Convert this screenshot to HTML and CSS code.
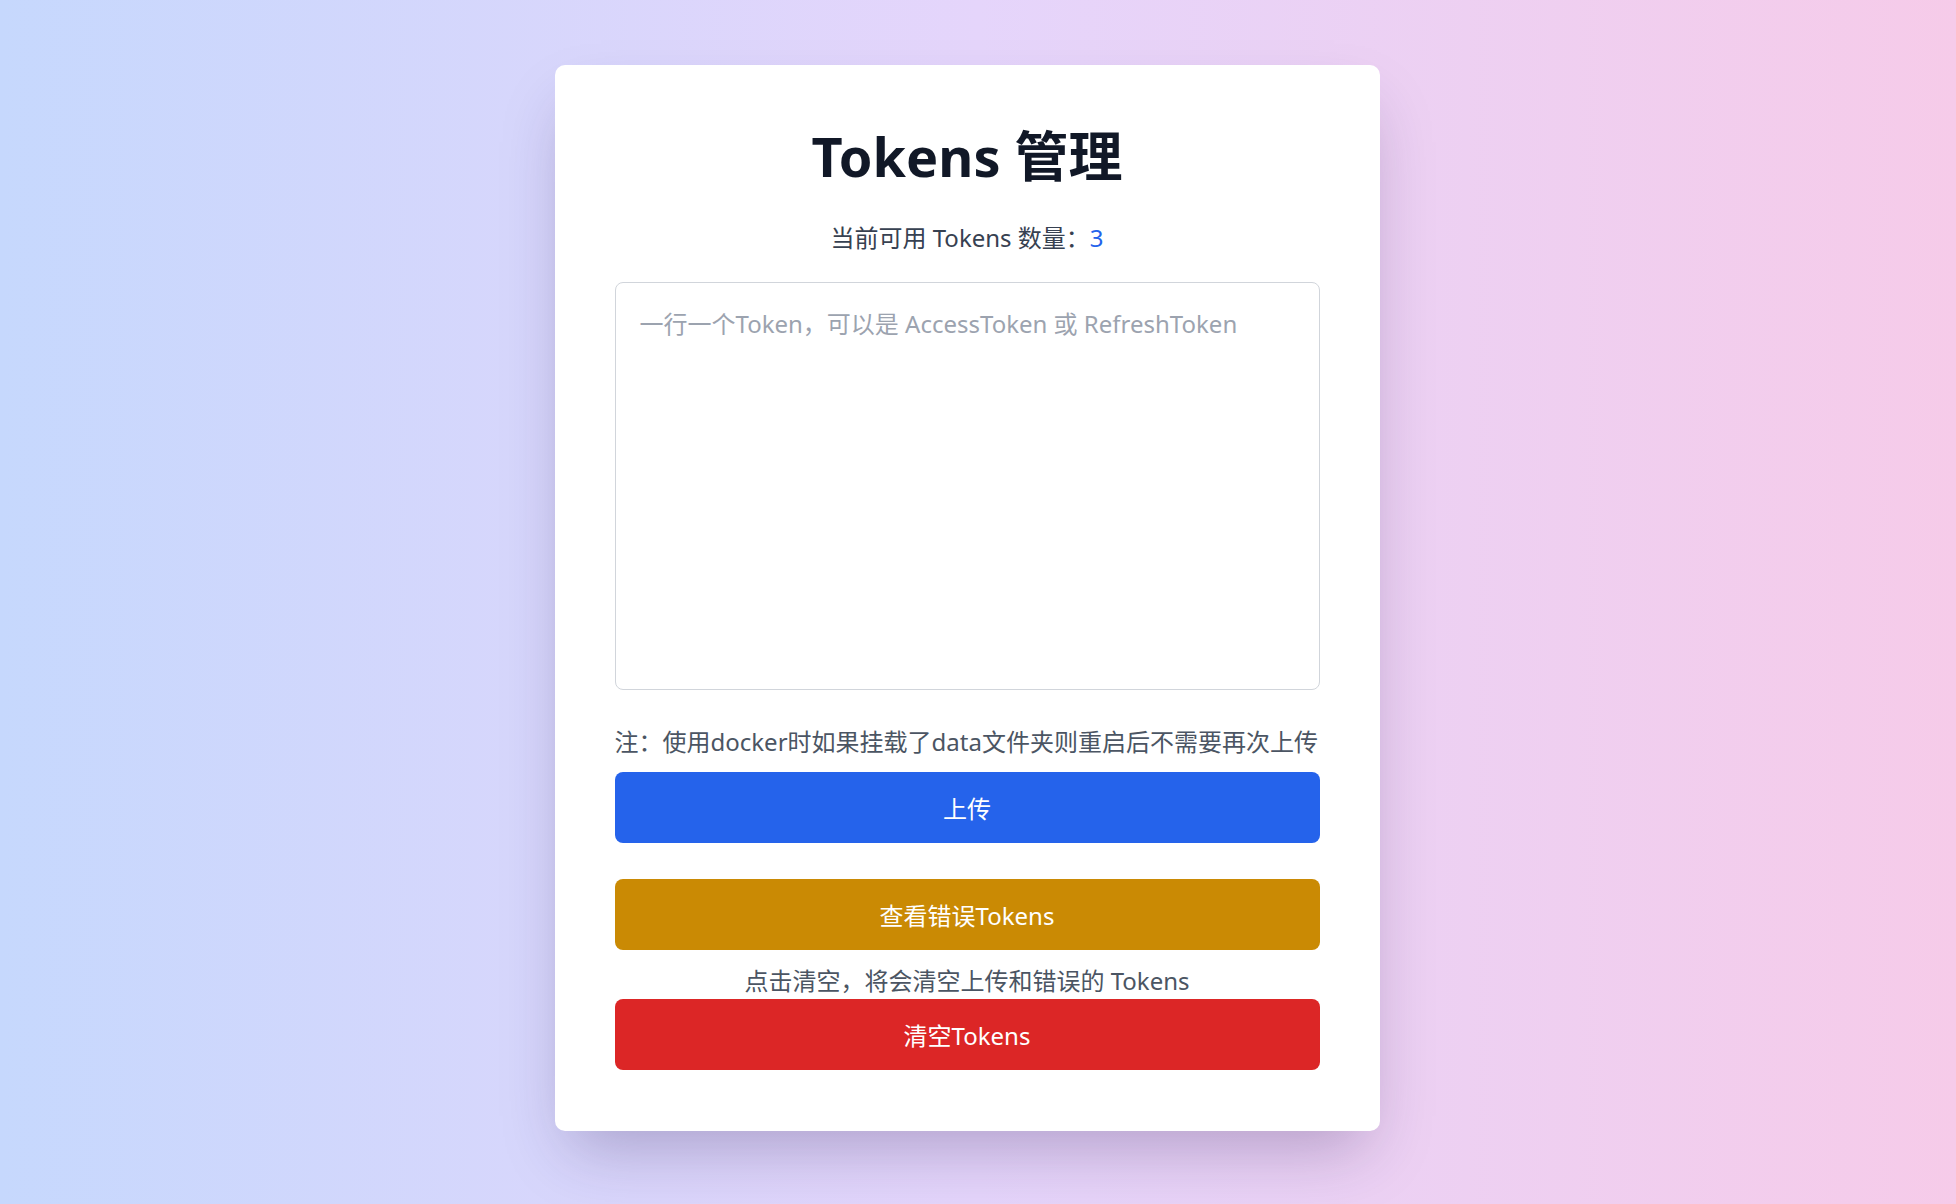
FILE: index.html
```html
<!DOCTYPE html>
<html lang="zh-CN">
<head>
<meta charset="utf-8">
<title>Tokens 管理</title>
<link rel="stylesheet" href="styles.css">
</head>
<body>
<main class="page">
  <section class="card">
    <h1 class="title">Tokens 管理</h1>
    <p class="count">当前可用 Tokens 数量：<span class="count-num">3</span></p>
    <textarea class="tokens-input" placeholder="一行一个Token，可以是 AccessToken 或 RefreshToken"></textarea>
    <p class="note">注：使用docker时如果挂载了data文件夹则重启后不需要再次上传</p>
    <button class="btn btn-blue" type="button">上传</button>
    <button class="btn btn-yellow" type="button">查看错误Tokens</button>
    <p class="note note-center">点击清空，将会清空上传和错误的 Tokens</p>
    <button class="btn btn-red" type="button">清空Tokens</button>
  </section>
</main>
</body>
</html>
```
FILE: styles.css
```css
html, body {
  margin: 0;
  padding: 0;
}
body {
  min-height: 1204px;
  background: linear-gradient(to right, #c6d8fd 0%, #e5d5fb 50%, #f6cbe9 100%);
  font-family: "Noto Sans", "Noto Sans CJK SC", sans-serif;
}
.page {
  display: flex;
  justify-content: center;
  padding-top: 65px;
  padding-right: 22px;
}
.card {
  box-sizing: border-box;
  width: 825px;
  background: #ffffff;
  border-radius: 10px;
  padding: 60px 60px 61px;
  display: flex;
  flex-direction: column;
  box-shadow: 0 31px 62px -15px rgba(40, 20, 80, 0.28);
}
.title {
  margin: 0;
  text-align: center;
  font-size: 54px;
  line-height: 62px;
  font-weight: 700;
  color: #111827;
}
.count {
  margin: 33px 0 0;
  text-align: center;
  font-size: 24px;
  line-height: 36px;
  color: #374151;
}
.count-num {
  color: #2563eb;
}
.tokens-input {
  box-sizing: border-box;
  margin-top: 26px;
  width: 100%;
  height: 408px;
  border: 1px solid #d1d5db;
  border-radius: 8px;
  padding: 23px 24px;
  font-family: inherit;
  font-size: 24px;
  line-height: 36px;
  color: #111827;
  resize: none;
  outline: none;
}
.tokens-input::placeholder {
  color: #9ca3af;
}
.note {
  margin: 34px 0 0;
  font-size: 24px;
  line-height: 36px;
  color: #4b5563;
  white-space: nowrap;
}
.note-center {
  margin-top: 13px;
  text-align: center;
}
.btn {
  display: block;
  width: 100%;
  height: 71px;
  border: 0;
  border-radius: 8px;
  font-family: inherit;
  font-size: 24px;
  color: #ffffff;
  cursor: pointer;
}
.btn-blue {
  margin-top: 12px;
  background: #2563eb;
}
.btn-yellow {
  margin-top: 36px;
  background: #ca8a04;
}
.btn-red {
  margin-top: 0;
  background: #dc2626;
}
```
